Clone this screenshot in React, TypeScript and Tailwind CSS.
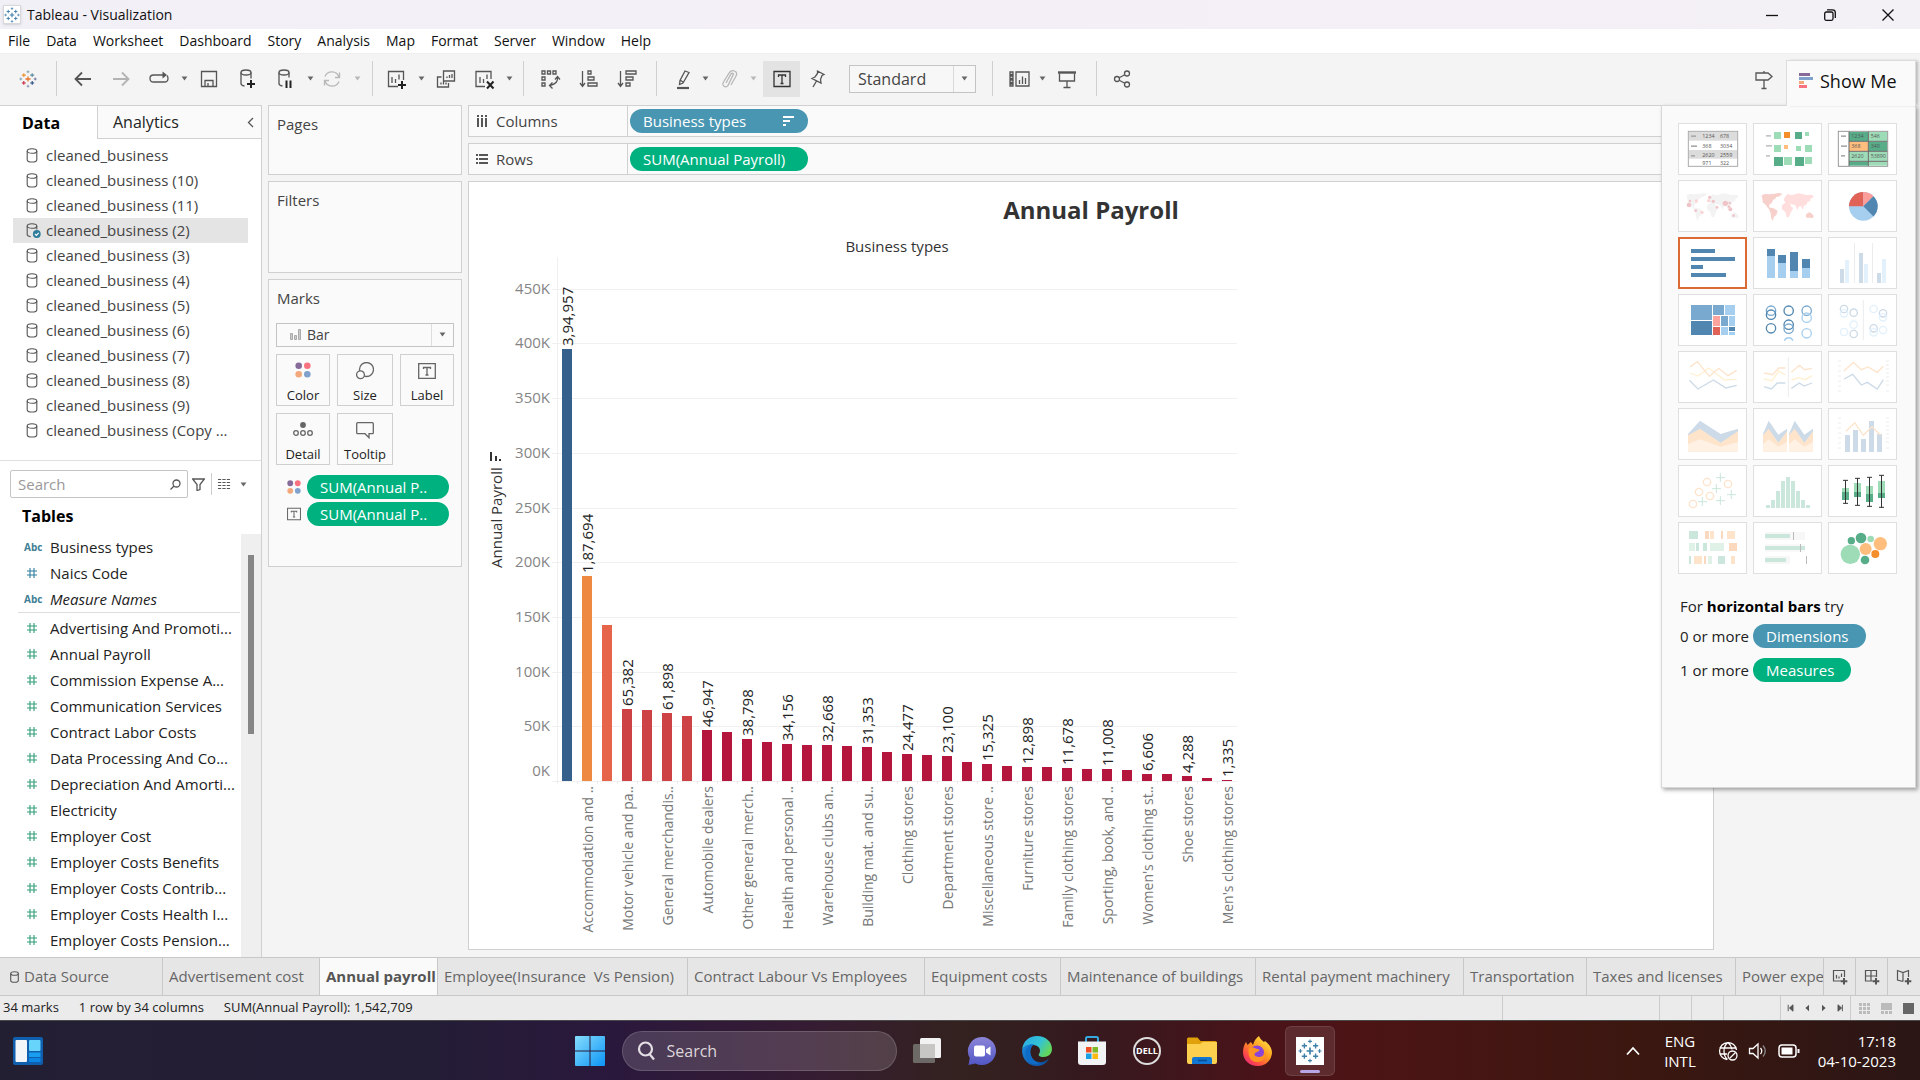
import React from "react";

type IconProps = { children: React.ReactNode; size?: string; className?: string; box?: string; sw?: number };

function Icon({ children, size = "w-6 h-6", className = "text-[#555]", box = "0 0 24 24", sw = 1.3 }: IconProps) {
  return (
    <svg viewBox={box} className={`${size} ${className} shrink-0`} fill="none" stroke="currentColor" strokeWidth={sw} aria-hidden="true">
      {children}
    </svg>
  );
}

const Caret = ({ className = "text-[#666]" }: { className?: string }) => (
  <svg viewBox="0 0 8 6" className={`h-[5px] w-[7px] ${className}`} aria-hidden="true">
    <path d="M0.5 0.5h7L4 5.5z" fill="currentColor" />
  </svg>
);

function TableauMark({ className, colors }: { className: string; colors: string[] }) {
  const plus = (x: number, y: number, r: number, w: number, c: string) => (
    <path key={`${x}-${y}`} d={`M${x - r} ${y}H${x + r}M${x} ${y - r}V${y + r}`} stroke={c} strokeWidth={w} />
  );
  return (
    <svg viewBox="0 0 24 24" className={className} fill="none" aria-hidden="true">
      {plus(12, 12, 3.4, 1.7, colors[0])}
      {plus(6.4, 6.8, 2.6, 1.4, colors[1])}
      {plus(17.6, 6.8, 2.6, 1.4, colors[2])}
      {plus(6.4, 17.2, 2.6, 1.4, colors[3])}
      {plus(17.6, 17.2, 2.6, 1.4, colors[4])}
      {plus(12, 2.4, 1.9, 1.1, colors[5])}
      {plus(12, 21.6, 1.9, 1.1, colors[6])}
      {plus(2.4, 12, 1.9, 1.1, colors[7])}
      {plus(21.6, 12, 1.9, 1.1, colors[8])}
    </svg>
  );
}

const blueMark = Array(9).fill("#3f80a8") as string[];
const brandMark = ["#e8762c", "#eb9129", "#5b879b", "#c72037", "#1f457e", "#7199a6", "#7b8cae", "#7199a6", "#5c6591"];

/* ---------- Title bar and menu ---------- */

function TitleBar() {
  return (
    <header className="flex h-[29px] shrink-0 items-center bg-gradient-to-r from-[#f2f0f7] via-[#f4eff6] to-[#f3f0f6]">
      <div className="ml-[3px] flex h-[19px] w-[18px] items-center justify-center border border-[#d8d8d8] bg-white shadow-sm">
        <TableauMark className="h-4 w-4" colors={blueMark} />
      </div>
      <span className="ml-1.5 text-sm text-[#111]">Tableau - Visualization</span>
      <div className="ml-auto flex text-[#111]">
        <button aria-label="Minimize" className="flex h-[29px] w-[58px] items-center justify-center">
          <Icon size="w-3 h-3" className="text-[#111]" box="0 0 12 12"><path d="M0 6.5h12" /></Icon>
        </button>
        <button aria-label="Restore" className="flex h-[29px] w-[58px] items-center justify-center">
          <Icon size="w-3 h-3" className="text-[#111]" box="0 0 12 12"><rect x="0.7" y="3" width="8.3" height="8.3" rx="1.5" /><path d="M3 .8h5.5q2.8 0 2.8 2.8V9" /></Icon>
        </button>
        <button aria-label="Close" className="mr-[3px] flex h-[29px] w-[58px] items-center justify-center">
          <Icon size="w-3 h-3" className="text-[#111]" box="0 0 12 12"><path d="M.5 .5l11 11M11.500 .5l-11 11" /></Icon>
        </button>
      </div>
    </header>
  );
}

const menus = ["File", "Data", "Worksheet", "Dashboard", "Story", "Analysis", "Map", "Format", "Server", "Window", "Help"];

function MenuBar() {
  return (
    <nav className="flex h-[25px] shrink-0 items-center gap-4 border-b border-[#eee] bg-white px-2 text-sm text-[#111]">
      {menus.map((m) => (
        <button key={m}>{m}</button>
      ))}
    </nav>
  );
}

/* ---------- Toolbar ---------- */

const Sep = ({ className = "" }: { className?: string }) => <span className={`h-[35px] w-px shrink-0 bg-[#cfcfcf] ${className}`} />;

function Tool({ label, w = "w-[38px]", children, className = "" }: { label: string; w?: string; children: React.ReactNode; className?: string }) {
  return (
    <button aria-label={label} className={`flex h-9 shrink-0 items-center justify-center ${w} ${className}`}>
      {children}
    </button>
  );
}

function Toolbar() {
  return (
    <div className="flex h-[51px] shrink-0 items-center bg-[#f4f4f4] pb-0.5">
      <Tool label="Start page" w="w-14"><TableauMark className="h-[18px] w-[18px]" colors={brandMark} /></Tool>
      <Sep className="mr-[7px]" />
      <Tool label="Undo"><Icon sw={1.8}><path d="M20 12H4.500M11 5.500L4.500 12l6.500 6.500" /></Icon></Tool>
      <Tool label="Redo"><Icon sw={1.8} className="text-[#b3b3b3]"><path d="M4 12h15.500M13 5.500l6.500 6.500-6.500 6.500" /></Icon></Tool>
      <Tool label="Replay"><Icon><path d="M15 8H6.500q-3.500 0-3.500 3.500t3.500 3.500h11q3.500 0 3.500-3.500 0-2-1-3M9 8h9" /><path d="M15.500 4.500L20 8l-4.500 3.500z" fill="currentColor" stroke="none" /></Icon></Tool>
      <Tool label="Replay options" w="w-3"><Caret /></Tool>
      <Tool label="Save"><Icon><path d="M4.500 4.500h15v15h-15z" /><path d="M8 19.500v-6h8v6M11 16v3" /></Icon></Tool>
      <Tool label="New data source"><Icon><ellipse cx="11" cy="5.500" rx="5" ry="2.500" /><path d="M6 5.500v11q0 2 3.500 2.500M16 5.500v6" /><path d="M16 13v8M12 17h8" stroke="#222" strokeWidth="2" /></Icon></Tool>
      <Tool label="Pause updates"><Icon><ellipse cx="11" cy="5.500" rx="5" ry="2.500" /><path d="M6 5.500v11q0 2 3.500 2.500M16 5.500v5" /><path d="M13.500 13.500v7.500M17.500 13.500v7.500" stroke="#222" strokeWidth="2" /></Icon></Tool>
      <Tool label="Pause options" w="w-3"><Caret /></Tool>
      <Tool label="Run update" w="w-8"><Icon className="text-[#b8b8b8]"><path d="M5 9.500A7.500 7.500 0 0 1 19 10M19 14.500A7.500 7.500 0 0 1 5 14M19.500 5.500V10.500H15M4.500 18.500v-5H9" /></Icon></Tool>
      <Tool label="Update options" w="w-[18px]"><Caret className="text-[#b8b8b8]" /></Tool>
      <Sep className="ml-1.5 mr-1" />
      <Tool label="New worksheet"><Icon><path d="M14 19.500H4.500v-15h15V13M8 10v6M11.500 12v4M15 7.500v5" /><path d="M18 14v8M14 18h8" stroke="#222" strokeWidth="2" /></Icon></Tool>
      <Tool label="New worksheet options" w="w-3"><Caret /></Tool>
      <Tool label="Duplicate"><Icon><path d="M9.500 4h11v10h-11zM7.500 10H3.500v10h11v-4M13 11V9.500M15.500 11V8M18 11V7M7 17.500v-2M9.500 17.500v-3M12 17.500v-2" /></Icon></Tool>
      <Tool label="Clear sheet"><Icon><path d="M13 19.500H4v-15h15V12M8 10v6M11.500 12v4M15 7.500V12" /><path d="M15 14.500l6.500 7M21.500 14.500l-6.500 7" stroke="#222" strokeWidth="2" /></Icon></Tool>
      <Tool label="Clear options" w="w-3"><Caret /></Tool>
      <Sep className="ml-2 mr-1.5" />
      <Tool label="Swap rows and columns" w="w-10"><Icon><path d="M4 4h3v3H4zM9.500 4h3v3h-3zM15 4h3v3h-3zM4 10h3v3H4zM4 16h3v3H4z" /><path d="M19.500 10q1 7-8 8.500M17 12.500l2.500-3 2.500 3M14.500 15.500l-3 3 3 3" /></Icon></Tool>
      <Tool label="Sort ascending"><Icon><path d="M5.500 4v15M3 16l2.500 3.500L8 16M11 4h3v3h-3zM11 10h6v3h-6zM11 16h9v3h-9z" /></Icon></Tool>
      <Tool label="Sort descending"><Icon><path d="M5.500 4v15M3 16l2.500 3.500L8 16M11 4h10v3H11zM11 10h7v3h-7zM11 16h4v3h-4z" /></Icon></Tool>
      <Sep className="ml-2.5 mr-2.5" />
      <Tool label="Highlight" w="w-8"><Icon><path d="M14 4l4 1.500-6 10.500-3.500 1.500.5-4zM9 13l3 2" /><path d="M6 21h12" strokeWidth="2.200" /></Icon></Tool>
      <Tool label="Highlight options" w="w-3"><Caret /></Tool>
      <Tool label="Group members" w="w-9"><Icon className="text-[#b8b8b8]"><path d="M9 16l5-9q1.500-1.500 2.500 0L11 18.500q-3 3-5-.5-.5-1.500.5-3l6-9.500q3-3.500 6.500-.500 1.500 2 0 4L14 18" /></Icon></Tool>
      <Tool label="Group options" w="w-3"><Caret className="text-[#b8b8b8]" /></Tool>
      <Tool label="Show mark labels" w="w-[37px]" className="ml-1 bg-[#e3e3e3]"><Icon className="text-[#333]"><path d="M4 4.500h16v15H4z" /><path d="M8.500 10V8h7v2M12 8v8.500M10.500 16.500h3" /></Icon></Tool>
      <Tool label="Fix axes" w="w-[34px]"><Icon><path d="M12.500 4l6.500 3.500-2 1-1.500 4 .5 3.500-9-4.500 3-1.500 2.500-3.500zM11.500 14L8 20" /></Icon></Tool>
      <label className="relative ml-[15px] flex h-7 w-[127px] shrink-0 items-center border border-[#c4c4c4] bg-[#f7f7f7]">
        <span className="sr-only">Fit</span>
        <select className="h-full w-full appearance-none bg-transparent pl-2 text-base text-[#444] outline-none">
          <option>Standard</option>
          <option>Entire View</option>
        </select>
        <span className="pointer-events-none absolute right-0 top-0 flex h-full w-[22px] items-center justify-center border-l border-[#d9d9d9]"><Caret /></span>
      </label>
      <Sep className="ml-4 mr-[9px]" />
      <Tool label="Show cards" w="w-9"><Icon><path d="M2 5h3v2.500H2zM2 9h3v2.500H2zM2 13h3v2.500H2zM2 17h3v2H2zM8 5h13v14H8zM11.500 17v-4M14.500 17V9.500M17.500 17v-6" /></Icon></Tool>
      <Tool label="Card options" w="w-2"><Caret /></Tool>
      <Tool label="Presentation mode" w="w-[42px]"><Icon><path d="M4.500 6.500v7.500h15V6.500M12 14v6M8.500 20.500h7" /><path d="M3 5.500h18" strokeWidth="2.400" /></Icon></Tool>
      <Sep className="ml-2 mr-1.5" />
      <Tool label="Share"><Icon><circle cx="7" cy="12" r="2.500" /><circle cx="17" cy="6.500" r="2.500" /><circle cx="17" cy="17.500" r="2.500" /><path d="M9.200 10.800l5.600-3M9.200 13.200l5.600 3" /></Icon></Tool>
      <Tool label="Guide" className="ml-auto mr-[137px]"><Icon><path d="M4 6h12l4 3.500-4 3.500H4zM12 4v2M12 13v8.500M9.500 21.500h5" /></Icon></Tool>
    </div>
  );
}

/* ---------- Data pane ---------- */

const sources = ["", " (10)", " (11)", " (2)", " (3)", " (4)", " (5)", " (6)", " (7)", " (8)", " (9)", " (Copy ..."];

function Cylinder({ checked = false }: { checked?: boolean }) {
  return (
    <Icon size="w-[15px] h-[15px]" box="0 0 15 15" sw={1.1}>
      <ellipse cx="6" cy="3" rx="4.800" ry="2.300" />
      <path d={checked ? "M1.200 3v8.500q0 1.500 3.500 2.300M10.800 3v3.500" : "M1.200 3v8.700q0 2.300 4.800 2.300t4.800-2.300V3"} />
      {checked && <circle cx="10.800" cy="11" r="3.900" fill="#2f7d9d" stroke="none" />}
      {checked && <path d="M9 11l1.400 1.400 2.300-2.600" stroke="#fff" />}
    </Icon>
  );
}

const dimensions = [
  { kind: "Abc", name: "Business types" },
  { kind: "#", name: "Naics Code" },
  { kind: "Abc", name: "Measure Names", italic: true },
];

const measures = [
  "Advertising And Promoti...", "Annual Payroll", "Commission Expense A...", "Communication Services", "Contract Labor Costs",
  "Data Processing And Co...", "Depreciation And Amorti...", "Electricity", "Employer Cost", "Employer Costs Benefits",
  "Employer Costs Contrib...", "Employer Costs Health I...", "Employer Costs Pension...",
];

const Hash = ({ className }: { className: string }) => (
  <Icon size="w-2.5 h-2.5" className={className} box="0 0 10 10" sw={1.1}><path d="M3 0v10M7 0v10M0 3h10M0 7h10" /></Icon>
);

function DataPane() {
  return (
    <aside className="flex w-[262px] shrink-0 flex-col border-r border-t border-[#d0d0d0] bg-white">
      <div className="flex h-[33px] shrink-0">
        <button className="w-[97px] pr-[15px] text-base font-bold text-black">Data</button>
        <div className="flex flex-1 items-center justify-between border-b border-l border-[#d0d0d0] bg-[#fafafa] pl-[15px] pr-[7px]">
          <button className="text-base text-[#222]">Analytics</button>
          <button aria-label="Collapse pane"><Icon size="w-[7px] h-[11px]" box="0 0 7 11"><path d="M6 1L1.500 5.500 6 10" /></Icon></button>
        </div>
      </div>
      <ul className="h-[322px] shrink-0 border-b border-[#e0e0e0] pl-[13px] pr-[13px] pt-1 text-[15px] text-[#444]">
        {sources.map((s) => (
          <li key={s} className={`flex h-[25px] items-center gap-[5px] whitespace-nowrap pl-[13px] ${s === " (2)" ? "bg-[#e4e4e4]" : ""}`}>
            <Cylinder checked={s === " (2)"} />
            <button>cleaned_business{s}</button>
          </li>
        ))}
      </ul>
      <div className="flex shrink-0 items-center pl-2.5 pt-[9px]">
        <label className="flex h-7 w-[178px] items-center rounded-xs border border-[#c4c4c4] pr-1.5">
          <span className="sr-only">Search fields</span>
          <input placeholder="Search" className="w-full min-w-0 flex-1 pl-[7px] text-[15px] outline-none placeholder:text-[#999]" />
          <Icon size="w-[11px] h-[11px]" box="0 0 11 11"><circle cx="6.500" cy="4.500" r="3.500" /><path d="M4 7L.5 10.500" /></Icon>
        </label>
        <button aria-label="Filter fields" className="ml-1"><Icon size="w-[13px] h-[13px]" box="0 0 13 13"><path d="M.6 1h11.800L8 6.500v5l-3 1v-6z" /></Icon></button>
        <span className="ml-1.5 h-[22px] w-px bg-[#ccc]" />
        <button aria-label="View as" className="ml-1.5 flex items-center gap-2.5"><Icon size="w-3 h-3" box="0 0 12 12" sw={1.2}><path d="M0 1.500h3.200m1.200 0h3.200m1.200 0H12M0 4.500h3.200m1.200 0h3.200m1.200 0H12M0 7.500h3.200m1.200 0h3.200m1.200 0H12M0 10.500h3.200m1.200 0h3.200m1.200 0H12" /></Icon><Caret /></button>
      </div>
      <h2 className="flex h-9 shrink-0 items-center pl-[22px] text-base font-bold text-black">Tables</h2>
      <div className="flex min-h-0 flex-1 overflow-hidden">
        <div className="flex-1 overflow-hidden pl-[18px] pr-px text-[15px] text-[#222]">
          <ul className="border-b border-[#ddd]">
            {dimensions.map((d) => (
              <li key={d.name} className="flex h-[26px] items-center">
                <span className="flex w-8 items-center pl-1.5">
                  {d.kind === "#" ? <span className="pl-[3px]"><Hash className="text-[#2f7d9d]" /></span> : <span className="text-[10px] font-bold text-[#3f7f95]">Abc</span>}
                </span>
                <button className={d.italic ? "italic" : ""}>{d.name}</button>
              </li>
            ))}
          </ul>
          <ul className="pt-0.5">
            {measures.map((m) => (
              <li key={m} className="flex h-[26px] items-center whitespace-nowrap">
                <span className="flex w-8 items-center pl-[9px]"><Hash className="text-[#2f9d78]" /></span>
                <button>{m}</button>
              </li>
            ))}
          </ul>
        </div>
        <div className="w-5 shrink-0 bg-[#efefef] pl-[7px] pt-[21px]">
          <div className="h-[179px] w-1.5 bg-[#868686]" />
        </div>
      </div>
    </aside>
  );
}

/* ---------- Cards ---------- */

const ColorDots = ({ size = "w-4 h-4" }: { size?: string }) => (
  <svg viewBox="0 0 16 16" className={size} aria-hidden="true">
    <circle cx="3.700" cy="3.700" r="3.300" fill="#866b98" /><circle cx="12.300" cy="3.700" r="3.300" fill="#f8737f" />
    <circle cx="3.700" cy="12.300" r="3.300" fill="#f3a87b" /><circle cx="12.300" cy="12.300" r="3.300" fill="#7fa1cc" />
  </svg>
);

const TextBox = ({ size = "w-[18px] h-[18px]" }: { size?: string }) => (
  <Icon size={size} box="0 0 18 18" className="text-[#666]"><path d="M.7 1.700h16.600v14.600H.7zM5.500 7V5.500h7V7M9 5.500v7.500M7.500 13h3" /></Icon>
);

const markButtons = [
  { name: "Color", icon: <ColorDots size="w-4 h-4" /> },
  { name: "Size", icon: <Icon size="w-[18px] h-[18px]" box="0 0 18 18" className="text-[#666]"><circle cx="10.500" cy="7.500" r="7" /><circle cx="4.500" cy="12.700" r="3.900" fill="#fafafa" /></Icon> },
  { name: "Label", icon: <TextBox /> },
  { name: "Detail", icon: <Icon size="w-5 h-4" box="0 0 20 16" className="text-[#666]"><circle cx="10" cy="4" r="2.900" fill="currentColor" stroke="none" /><circle cx="3" cy="12" r="2.300" /><circle cx="10" cy="12" r="2.300" /><circle cx="17" cy="12" r="2.300" /></Icon> },
  { name: "Tooltip", icon: <Icon size="w-[18px] h-[18px]" box="0 0 18 18" className="text-[#666]"><path d="M1.700 1.700h14.600q1 0 1 1v9q0 1-1 1H13v4l-4-4H1.700q-1 0-1-1v-9q0-1 1-1z" /></Icon> },
];

function Cards() {
  return (
    <div className="flex w-[194px] shrink-0 flex-col gap-1.5 text-[15px] text-[#444]">
      <section className="h-[70px] border border-[#d0d0d0] bg-[#fafafa] px-2 pt-[7px]"><h2>Pages</h2></section>
      <section className="h-[92px] border border-[#d0d0d0] bg-[#fafafa] px-2 pt-[7px]"><h2>Filters</h2></section>
      <section className="h-[288px] border border-[#d0d0d0] bg-[#fafafa] px-[7px] pt-[7px]">
        <h2 className="pl-px">Marks</h2>
        <label className="relative mt-[13px] flex h-6 items-center border border-[#c4c4c4] bg-[#fafafa]">
          <span className="sr-only">Mark type</span>
          <svg viewBox="0 0 11 11" className="pointer-events-none absolute left-[13px] h-[11px] w-[11px]" fill="none" stroke="#aaa" aria-hidden="true"><path d="M.5 4.500h2v6h-2zM4.500 6.500h2v4h-2zM8.500 .5h2v10h-2z" fill="#ccc" /></svg>
          <select className="h-full w-full appearance-none bg-transparent pl-[30px] text-sm text-[#444] outline-none">
            <option>Bar</option>
            <option>Line</option>
          </select>
          <span className="pointer-events-none absolute right-0 top-0 flex h-full w-[22px] items-center justify-center border-l border-[#ddd]"><Caret /></span>
        </label>
        <div className="mt-[7px] grid grid-cols-[54px_56px_54px] gap-[7px] text-[13px] text-[#222]">
          {markButtons.map((b) => (
            <button key={b.name} className="flex h-[52px] flex-col items-center justify-between border border-[#cfcfcf] bg-[#fafafa] pt-[7px]">
              {b.icon}
              <span className="leading-5">{b.name}</span>
            </button>
          ))}
        </div>
        <div className="mt-2.5 flex flex-col gap-[3px]">
          {[<ColorDots key="c" size="w-3.5 h-3.5" />, <TextBox key="t" size="w-3.5 h-3.5" />].map((ic, i) => (
            <div key={i} className="flex items-center gap-1.5 pl-[11px] pr-[5px]">
              {ic}
              <button className="h-6 flex-1 rounded-full bg-[#00b180] pl-[13px] text-left text-[15px] leading-6 font-medium text-white">SUM(Annual P..</button>
            </div>
          ))}
        </div>
      </section>
    </div>
  );
}

function Shelf({ name, icon, children }: { name: string; icon: React.ReactNode; children: React.ReactNode }) {
  return (
    <div className="flex h-8 shrink-0 border border-[#d0d0d0] bg-[#fafafa] text-[15px] text-[#444]">
      <div className="flex w-[159px] items-center gap-2 border-r border-[#d0d0d0] pl-[7px]">
        {icon}
        <span>{name}</span>
      </div>
      <div className="flex items-center pl-0.5">{children}</div>
    </div>
  );
}

/* ---------- Bar chart ---------- */

const marks: { v: number; label?: string; cat?: string }[] = [
  { v: 394957, label: "3,94,957" }, { v: 187694, label: "1,87,694", cat: "Accommodation and .." },
  { v: 142700 }, { v: 65382, label: "65,382", cat: "Motor vehicle and pa.." },
  { v: 65000 }, { v: 61898, label: "61,898", cat: "General merchandis.." },
  { v: 59500 }, { v: 46947, label: "46,947", cat: "Automobile dealers" },
  { v: 44800 }, { v: 38798, label: "38,798", cat: "Other general merch.." },
  { v: 35700 }, { v: 34156, label: "34,156", cat: "Health and personal .." },
  { v: 32900 }, { v: 32668, label: "32,668", cat: "Warehouse clubs an.." },
  { v: 32200 }, { v: 31353, label: "31,353", cat: "Building mat. and su.." },
  { v: 26500 }, { v: 24477, label: "24,477", cat: "Clothing stores" },
  { v: 23800 }, { v: 23100, label: "23,100", cat: "Department stores" },
  { v: 17400 }, { v: 15325, label: "15,325", cat: "Miscellaneous store .." },
  { v: 13700 }, { v: 12898, label: "12,898", cat: "Furniture stores" },
  { v: 12800 }, { v: 11678, label: "11,678", cat: "Family clothing stores" },
  { v: 11300 }, { v: 11008, label: "11,008", cat: "Sporting, book, and .." },
  { v: 10500 }, { v: 6606, label: "6,606", cat: "Women's clothing st.." },
  { v: 6500 }, { v: 4288, label: "4,288", cat: "Shoe stores" },
  { v: 2800 }, { v: 1335, label: "1,335", cat: "Men's clothing stores" },
];

const barColor = (i: number) => (i === 0 ? "#35608c" : i === 1 ? "#ed8941" : i === 2 ? "#e66449" : i < 7 ? "#cd4345" : "#b5163e");

function BarChart() {
  const left = 88;
  const base = 525;
  const step = 20;
  const perK = 1.094;
  const right = left + marks.length * step;
  const ticks = [0, 50, 100, 150, 200, 250, 300, 350, 400, 450];
  return (
    <svg width="780" height="690" viewBox="0 0 780 690" className="block" role="img" aria-label="Annual payroll by business type" shapeRendering="crispEdges">
      {ticks.map((t) => {
        const y = Math.round(base - t * perK);
        return (
          <g key={t}>
            <path d={`M${left - 5} ${y + 0.5}H${right}`} stroke="#f0f0f0" />
            <text x={left - 7} y={t === 0 ? y - 5 : y + 5} textAnchor="end" fontSize="15" fill="#858585">{t}K</text>
          </g>
        );
      })}
      <path d={`M${left + 0.5} 1V${base}`} stroke="#f0f0f0" />
      {marks.map((m, i) => {
        const h = Math.round((m.v / 1000) * perK);
        const x = left + i * step + 5;
        return (
          <g key={i}>
            <rect x={x} y={base - h} width="10" height={h} fill={barColor(i)} />
            <path d={`M${x - 4.5} ${base}v3`} stroke="#ececec" />
            {m.label && <text transform={`translate(${x + 11} ${base - h - 3}) rotate(-90)`} fontSize="15" fill="#222">{m.label}</text>}
            {m.cat && <text transform={`translate(${x + 11} ${base + 5}) rotate(-90)`} textAnchor="end" fontSize="14" fill="#777">{m.cat}</text>}
          </g>
        );
      })}
      <text transform="translate(33 312) rotate(-90)" fontSize="15" fill="#333">Annual Payroll</text>
      <path d="M22 195.500v9M27 199.500v5M31 202.500v2" stroke="#333" strokeWidth="2" />
    </svg>
  );
}

function Worksheet() {
  return (
    <main className="flex min-h-0 flex-1 flex-col overflow-hidden border border-[#d0d0d0] bg-white">
      <h1 className="pt-3 text-center text-2xl leading-8 font-bold text-[#333]">Annual Payroll</h1>
      <p className="mt-2.5 w-[856px] text-center text-[15px] leading-5 text-[#333]">Business types</p>
      <BarChart />
    </main>
  );
}

/* ---------- Show Me ---------- */

const R = ({ x, y, w, h, f }: { x: number; y: number; w: number; h: number; f: string }) => <rect x={x} y={y} width={w} height={h} fill={f} />;
type Q = [number, number, number, number, string];
const rects = (list: Q[]) => list.map(([x, y, w, h, f], i) => <R key={i} x={x} y={y} w={w} h={h} f={f} />);
const line = (d: string, c: string, w = 4) => <path d={d} stroke={c} strokeWidth={w} fill="none" />;
type C = [number, number, number, string];
const rings = (list: C[], w = 3) => list.map(([x, y, r, c], i) => <circle key={i} cx={x} cy={y} r={r} stroke={c} strokeWidth={w} fill="none" />);
const discs = (list: C[]) => list.map(([x, y, r, c], i) => <circle key={i} cx={x} cy={y} r={r} fill={c} />);

const americas = "M26 46l10-4 16 1 8-2 12 6-4 8-8 5-4 10-6 2-2 8 8 8-4 4-10-12-6-8-6-4-2-12zM62 42l14-3 12 2-8 8-8 2zM52 83l10 2 12 8-4 12-8 6-2 11-5-6-2-16-4-10z";
const eurasia = "M92 60l4-10 8-8 12 4 12-4 10-2 22 5 18 0 4 6-10 6 0 6-8 2-4 10-8 2-2 12-6-10-6 0-4 10-8-14-10-2-6-4-10 2zM87 76l10-8 14 2 4 10 6 4-8 14-6 14-6 0-4-16-10-8z";
const australia = "M158 104l10-7 6 2 8 8-2 8-8-2-12 0z";

const DB = "#5086b0", LB = "#a6cfef", MB = "#7aa9cf", FB = "#cddbe8", PB = "#e2f1fc", FO = "#fde4cb", FY = "#fff0d2";
const DG = "#57ad88", LG = "#9edcb8", FG = "#cbe6da", OR = "#f48d2c", LO = "#ffbe7d";

const scales = (
  <path d="M30 30h9M30 45h9M30 60h9M30 75h9M30 90h9M30 105h9M30 120h9M174 30h9M174 42h9M174 54h9M174 66h9M174 78h9M174 90h9M174 102h9M174 120h9" stroke="#ececec" strokeWidth="3" />
);
const cellText = (rows: [number, number, string][]) => rows.map(([x, y, s]) => <text key={s} x={x} y={y} fontSize="16" fill="#555">{s}</text>);

const charts: { name: string; art: React.ReactNode }[] = [
  { name: "Text table", art: <><rect x="31" y="25" width="148" height="105" fill="#fff" stroke="#aaa" strokeWidth="3" />{rects([[33, 27, 144, 26, "#dcdcdc"], [33, 81, 144, 26, "#dcdcdc"], [39, 37, 15, 5, "#aaa"], [39, 67, 18, 5, "#aaa"], [39, 96, 12, 5, "#aaa"]])}{cellText([[73, 46, "1234"], [126, 46, "678"], [73, 74, "368"], [126, 74, "3034"], [73, 101, "2620"], [126, 101, "2559"], [73, 125, "971"], [126, 125, "322"]])}</> },
  { name: "Heat map", art: rects([[39, 36, 15, 5, "#c4c4c4"], [39, 66, 18, 5, "#c4c4c4"], [39, 96, 12, 5, "#c4c4c4"], [63, 27, 21, 21, LG], [93, 27, 18, 18, OR], [126, 27, 21, 21, DG], [156, 27, 12, 12, LG], [63, 66, 21, 21, LG], [93, 66, 12, 12, LO], [129, 69, 15, 15, LG], [156, 66, 21, 21, LG], [63, 102, 27, 27, DG], [93, 102, 24, 24, LG], [126, 102, 27, 27, DG], [156, 102, 21, 21, LG]]) },
  { name: "Highlight table", art: <><rect x="31" y="25" width="148" height="105" fill="#fff" stroke="#999" strokeWidth="3" />{rects([[63, 27, 57, 27, DG], [122, 27, 55, 27, LG], [63, 57, 57, 27, LO], [122, 57, 55, 27, DG], [63, 87, 57, 27, LG], [122, 87, 55, 27, LG], [63, 117, 57, 11, DG], [122, 117, 55, 11, LG], [39, 37, 15, 5, "#aaa"], [39, 67, 18, 5, "#aaa"], [39, 96, 12, 5, "#aaa"]])}<path d="M63 26v103M121 26v103M63 55h115M63 85h115M63 115h115" stroke="#666" strokeWidth="3" />{cellText([[70, 46, "1234"], [128, 46, "546"], [70, 76, "368"], [128, 76, "340"], [70, 106, "2620"], [128, 106, "53890"]])}</> },
  { name: "Symbol map", art: <><path d={americas + eurasia + australia} fill="#f3f3f3" />{discs([[33, 75, 7, "#efc3c7"], [36, 63, 4, "#efc3c7"], [55, 63, 5, "#fbd5d5"], [95, 52, 5, "#efc3c7"], [92, 62, 5, "#fbd5d5"], [106, 64, 5, "#efc3c7"], [142, 70, 8, "#efc3c7"], [155, 69, 4, "#efc3c7"], [153, 80, 4, "#efc3c7"], [157, 88, 6, "#efc3c7"], [117, 82, 4, "#efc3c7"], [53, 92, 4, "#efc3c7"], [72, 97, 5, "#fbd5d5"], [167, 107, 4, "#efc3c7"]])}</> },
  { name: "Filled map", art: <><path d={americas + australia} fill="#f7cfcb" /><path d={eurasia} fill="#ffdedd" /></> },
  { name: "Pie chart", art: <><circle cx="106" cy="79" r="43" fill={LB} /><path d="M106 79V36a43 43 0 0 0-43 43z" fill="#e16358" /><path d="M106 79V36a43 43 0 0 1 30.400 12.600z" fill="#ff9d9a" /><path d="M106 79l30.400-30.400a43 43 0 0 1 0 60.800z" fill={DB} /></> },
  { name: "Horizontal bars", art: rects([[39, 36, 72, 12, DB], [39, 60, 132, 12, DB], [39, 84, 36, 12, DB], [39, 108, 105, 12, DB]]) },
  { name: "Stacked bars", art: rects([[42, 36, 24, 21, DB], [42, 57, 24, 66, LB], [75, 54, 24, 24, DB], [75, 78, 24, 45, LB], [111, 45, 24, 57, DB], [111, 102, 24, 21, LB], [147, 66, 24, 27, DB], [147, 93, 24, 30, LB]]) },
  { name: "Side-by-side bars", art: rects([[36, 96, 12, 42, FB], [51, 69, 12, 69, PB], [78, 18, 3, 120, "#ececec"], [93, 48, 12, 90, FB], [108, 81, 12, 57, PB], [132, 18, 3, 120, "#ececec"], [147, 108, 12, 30, FB], [162, 66, 12, 72, PB]]) },
  { name: "Treemap", art: rects([[39, 33, 63, 45, MB], [39, 81, 63, 42, DB], [105, 33, 33, 30, MB], [141, 33, 30, 30, LB], [105, 66, 21, 30, "#ffa39e"], [129, 66, 21, 30, MB], [153, 66, 18, 30, LB], [105, 99, 21, 24, "#e16358"], [129, 99, 21, 24, LB], [153, 99, 18, 12, DB], [153, 114, 18, 9, LB]]) },
  { name: "Circle views", art: <>{rings([[54, 50, 14, MB], [54, 62, 14, DB], [54, 103, 14, DB], [107, 50, 14, DB], [107, 92, 14, DB], [107, 104, 14, MB], [161, 50, 14, MB], [161, 71, 14, LB], [161, 118, 14, LB]], 4)}<path d="M94 140a14 14 0 0 1 26 0" stroke={LB} strokeWidth="4" fill="none" /></> },
  { name: "Side-by-side circles", art: <>{rings([[48, 45, 11, FB], [48, 58, 11, PB], [77, 56, 11, FB], [77, 92, 11, PB], [48, 114, 11, PB], [77, 120, 11, FB], [137, 45, 11, PB], [165, 58, 11, FB], [165, 70, 11, PB], [137, 103, 11, FB], [137, 115, 11, PB], [165, 108, 11, PB]], 4)}<path d="M106 18v120" stroke="#ececec" strokeWidth="3" /></> },
  { name: "Continuous lines", art: <>{line("M36 66l24 9 32-24 48 36 36-2", FY)}{line("M36 48l22-16 36 44 28-24 28 22 26-16", FO)}{line("M34 88l26 26 46-27 38 24 32-8", FB)}</> },
  { name: "Discrete lines", art: <><path d="M106 18v120" stroke="#ececec" strokeWidth="3" />{line("M33 84l24 5 20-29 20 12M115 87l22-7 20 6 20-12", FY)}{line("M33 66l26 5 18-20h20M115 64l24-21 16 13 22-4", FO)}{line("M33 107l22 7 18-18h24M115 112l24-16 14 9 24-9", FB)}</> },
  { name: "Dual lines", art: <>{scales}{line("M48 60l28-26 24 22 20-8 28 16 18-18", FO)}{line("M48 84l26-14 26 32 18-8 30 20 18-28", FB)}</> },
  { name: "Area, continuous", art: <><path d="M30 78l36-40 62 40 52-16v69H30z" fill={FB} /><path d="M30 82l36-20 62 42 52-34v61H30z" fill={FO} /><path d="M30 108l36-14 62 22 52-14v29H30z" fill="#fff1e3" /></> },
  { name: "Area, discrete", art: <><path d="M30 78l17-40 29 42 26-18v69H30zM108 78l17-40 29 42 26-18v69h-72z" fill={FB} /><path d="M30 82l17-20 29 42 26-34v61H30zM108 82l17-20 29 42 26-34v61h-72z" fill={FO} /><path d="M30 108l17-14 29 22 26-14v29H30zM108 108l17-14 29 22 26-14v29h-72z" fill="#fff1e3" /></> },
  { name: "Dual combination", art: <>{scales}{rects([[51, 81, 15, 51, FB], [75, 66, 15, 66, FB], [99, 93, 15, 39, FB], [123, 39, 15, 93, FB], [147, 78, 15, 54, FB]])}{line("M54 70l26-26 26 38 26-26 26 26", FO)}</> },
  { name: "Scatter plot", art: <>{rings([[87, 51, 11, FO], [150, 57, 11, FO], [63, 81, 11, FO], [96, 93, 11, FO], [45, 117, 11, FO]], 4)}{line("M114 38h27M127 24v27M102 71h27M115 57v27M147 89h27M160 75v27M60 110h27M73 96v27M114 107h27M127 93v27", FG, 3)}</> },
  { name: "Histogram", art: rects([[39, 120, 12, 9, FG], [54, 105, 12, 24, FG], [69, 78, 12, 51, FG], [84, 48, 12, 81, FG], [99, 36, 12, 93, FG], [114, 48, 12, 81, FG], [129, 78, 12, 51, FG], [144, 105, 12, 24, FG], [159, 120, 12, 9, FG]]) },
  { name: "Box-and-whisker plot", art: <>{rects([[42, 69, 21, 12, LG], [42, 81, 21, 24, DG], [78, 54, 21, 27, LG], [78, 81, 21, 15, DG], [114, 63, 21, 24, LG], [114, 87, 21, 24, DG], [150, 48, 21, 36, LG], [150, 84, 21, 15, DG]])}<path d="M52.500 46v69M45 46h15M45 115h15M88.500 40v81M81 40h15M81 121h15M124.500 37v87M117 37h15M117 124h15M160.500 31v96M153 31h15M153 127h15" stroke="#333" strokeWidth="3" /></> },
  { name: "Gantt", art: rects([[33, 27, 27, 24, FG], [81, 27, 12, 24, "#fbd9bf"], [96, 27, 12, 24, FO], [129, 27, 6, 24, "#fbd9bf"], [147, 27, 24, 24, FO], [33, 63, 18, 24, "#e0f1e8"], [54, 63, 9, 24, FG], [75, 63, 12, 24, FG], [96, 63, 42, 24, "#e0f1e8"], [153, 63, 24, 24, "#fbd9bf"], [33, 102, 6, 24, FG], [48, 102, 24, 24, FO], [78, 102, 6, 24, "#fbd9bf"], [90, 102, 12, 24, "#e0f1e8"], [120, 102, 21, 24, FG], [159, 102, 12, 24, FO]]) },
  { name: "Bullet graph", art: rects([[36, 30, 120, 24, "#f7f7f7"], [36, 66, 120, 24, "#f9f9f9"], [36, 102, 75, 24, "#f7f7f7"], [36, 36, 75, 12, FG], [36, 72, 120, 12, FG], [36, 108, 63, 12, FG], [120, 30, 3, 24, "#bbb"], [141, 66, 3, 24, "#bbb"], [159, 102, 3, 24, "#bbb"]]) },
  { name: "Packed bubbles", art: discs([[67, 97, 29, LG], [70, 56, 11, DG], [99, 48, 16, DG], [128, 51, 10, LG], [157, 65, 20, LO], [113, 81, 18, LO], [142, 96, 12, OR], [111, 114, 13, DG]]) },
];

function ShowMe() {
  return (
    <aside className="absolute right-1 top-[60px] flex h-[728px] w-[255px] flex-col">
      <button className="relative z-10 ml-auto flex h-[46px] w-[130px] shrink-0 items-center gap-[7px] border border-b-0 border-[#dcdcdc] bg-[#fafafa] pb-1.5 pl-3 text-lg text-[#111] shadow-[3px_0_3px_-1px_rgba(0,0,0,0.250)]">
        <svg viewBox="0 0 14 15" className="h-[15px] w-3.5 shrink-0" aria-hidden="true">{rects([[0, 0, 11, 3, "#866b98"], [0, 4, 14, 3, "#7fa1cc"], [0, 8, 5, 3, "#f3a87b"], [0, 12, 8, 3, "#f8737f"]])}</svg>
        <span className="whitespace-nowrap">Show Me</span>
      </button>
      <div className="-mt-px flex-1 border border-[#d8d8d8] bg-[#fafafa] pl-4 pt-[17px] text-[15px] text-[#222] shadow-[2px_2px_4px_rgba(0,0,0,0.350)]">
        <div className="grid grid-cols-[69px_69px_69px] gap-x-1.5 gap-y-[5px]">
          {charts.map((c) => (
            <button key={c.name} aria-label={c.name} className={`h-[52px] bg-white ${c.name === "Horizontal bars" ? "outline-2 -outline-offset-2 outline-[#dc6a35]" : "outline -outline-offset-1 outline-[#dfdfdf]"}`}>
              <svg viewBox="0 0 207 156" className="block h-[52px] w-[69px]" aria-hidden="true">{c.art}</svg>
            </button>
          ))}
        </div>
        <p className="ml-0.5 mt-[22px] leading-5">For <b className="text-black">horizontal bars</b> try</p>
        <p className="ml-0.5 mt-2 flex h-6 items-center gap-1">0 or more <span className="h-6 w-[113px] rounded-full bg-[#4996b2] pl-[13px] leading-6 font-medium text-white">Dimensions</span></p>
        <p className="ml-0.5 mt-2.5 flex h-6 items-center gap-1">1 or more <span className="h-6 w-[98px] rounded-full bg-[#00b180] pl-[13px] leading-6 font-medium text-white">Measures</span></p>
      </div>
    </aside>
  );
}

/* ---------- Sheet tabs and status bar ---------- */

const sheets: [string, string][] = [
  ["Advertisement cost", "w-[157px]"], ["Annual payroll", "w-[118px]"], ["Employee(Insurance  Vs Pension)", "w-[250px]"],
  ["Contract Labour Vs Employees", "w-[237px]"], ["Equipment costs", "w-[136px]"], ["Maintenance of buildings", "w-[195px]"],
  ["Rental payment machinery", "w-[208px]"], ["Transportation", "w-[123px]"], ["Taxes and licenses", "w-[149px]"],
];

function SheetTabs() {
  return (
    <div className="flex h-[39px] shrink-0 border-y border-[#c8c8c8] bg-[#e6e6e6] text-[15px] text-[#666]">
      <button className="flex w-[163px] shrink-0 items-center gap-[5px] border-r border-[#c8c8c8] pl-2.5">
        <Icon size="w-[9px] h-3" box="0 0 9 12" sw={1.1}><ellipse cx="4.500" cy="2.500" rx="3.800" ry="1.800" /><path d="M.7 2.500v7q0 1.800 3.800 1.800t3.800-1.800v-7" /></Icon>
        Data Source
      </button>
      {sheets.map(([s, w]) => (
        <button key={s} className={`shrink-0 overflow-hidden whitespace-pre border-r border-[#c8c8c8] pl-1.5 text-left ${w} ${s === "Annual payroll" ? "bg-[#fafafa] font-bold text-[#555]" : ""}`}>{s}</button>
      ))}
      <button className="min-w-0 flex-1 overflow-hidden whitespace-nowrap border-r border-[#c8c8c8] pl-1.5 text-left">Power expenses</button>
      <button aria-label="New worksheet" className="flex w-8 shrink-0 items-center justify-center border-r border-[#c8c8c8]"><Icon size="w-4 h-4" box="0 0 16 16" sw={1.200}><path d="M9 12H1.500V1.500h11V8M4.500 6v3.500M7 7.500v2M9.500 4.500V8" /><path d="M12 9v6.500M8.800 12.200h6.500" strokeWidth="2" /></Icon></button>
      <button aria-label="New dashboard" className="flex w-8 shrink-0 items-center justify-center border-r border-[#c8c8c8]"><Icon size="w-4 h-4" box="0 0 16 16" sw={1.200}><path d="M9 12H1.500V1.500h11V8M1.500 7H12M7 1.500V12" /><path d="M12 9v6.500M8.800 12.200h6.500" strokeWidth="2" /></Icon></button>
      <button aria-label="New story" className="flex w-8 shrink-0 items-center justify-center"><Icon size="w-4 h-4" box="0 0 16 16" sw={1.200}><path d="M7 12.500L1.500 11V1.500L7 3.500l5.500-2V8M7 3.500v9" /><path d="M12 9v6.500M8.800 12.200h6.500" strokeWidth="2" /></Icon></button>
    </div>
  );
}

function StatusBar() {
  return (
    <footer className="flex h-6 shrink-0 items-stretch bg-[#ebebeb] text-[13px] text-[#222]">
      <div className="flex flex-1 items-center gap-5 pl-[3px]">
        <span>34 marks</span>
        <span>1 row by 34 columns</span>
        <span>SUM(Annual Payroll): 1,542,709</span>
      </div>
      <span className="w-[157px] border-l border-[#ccc]" />
      <span className="w-8 border-l border-[#ccc]" />
      <span className="w-8 border-l border-[#ccc]" />
      <span className="w-[57px] border-l border-[#ccc]" />
      <div className="flex w-[71px] items-center justify-between border-x border-[#ccc] px-1.5 text-[#555]">
        {["M1 1v8M7 1v8L2.500 5z", "M7 1v8L2.500 5z", "M2 1v8L6.500 5z", "M2 1v8L6.500 5zM7.500 1v8"].map((d, i) => (
          <button key={i} aria-label={["First sheet", "Previous sheet", "Next sheet", "Last sheet"][i]}>
            <svg viewBox="0 0 9 10" className="h-2 w-2" aria-hidden="true"><path d={d} fill="currentColor" stroke={i % 3 === 0 ? "currentColor" : "none"} strokeWidth="1.200" /></svg>
          </button>
        ))}
      </div>
      <div className="flex w-[69px] items-center justify-between pl-2 pr-1.5">
        <button aria-label="Sheet sorter"><svg viewBox="0 0 11 11" className="h-[11px] w-[11px]" fill="#bbb" aria-hidden="true"><path d="M0 0h3v3H0zM4 0h3v3H4zM8 0h3v3H8zM0 4h3v3H0zM4 4h3v3H4zM8 4h3v3H8zM0 8h3v3H0zM4 8h3v3H4zM8 8h3v3H8z" /></svg></button>
        <button aria-label="Filmstrip"><svg viewBox="0 0 11 11" className="h-[11px] w-[11px]" fill="#bbb" aria-hidden="true"><path d="M0 0h11v7H0zM0 8h3v3H0zM4 8h3v3H4zM8 8h3v3H8z" /></svg></button>
        <button aria-label="Tabs view"><span className="block h-[11px] w-[11px] bg-[#666]" /></button>
      </div>
    </footer>
  );
}

/* ---------- Taskbar ---------- */

const apps: { name: string; icon: React.ReactNode }[] = [
  { name: "Task view", icon: <svg viewBox="0 0 30 30" className="h-[30px] w-[30px]" aria-hidden="true"><rect x="1" y="8" width="22" height="19" rx="1.500" fill="#6d6966" /><rect x="8" y="2" width="21" height="20" rx="1.500" fill="#f2f2f2" /><rect x="8" y="8" width="15" height="14" fill="#c8c6c4" /></svg> },
  { name: "Chat", icon: <svg viewBox="0 0 30 30" className="h-[30px] w-[30px]" aria-hidden="true"><defs><linearGradient id="chat" x1="0" y1="0" x2="0" y2="1"><stop offset="0" stopColor="#8c85d8" /><stop offset="1" stopColor="#5257c4" /></linearGradient></defs><path d="M15 1a14 14 0 1 1-6.500 26.400L1.500 29l1.300-7A14 14 0 0 1 15 1z" fill="url(#chat)" /><rect x="7" y="9.500" width="11" height="11" rx="2" fill="#fff" /><path d="M19 13.500l4.500-3v9l-4.500-3z" fill="#fff" /></svg> },
  { name: "Microsoft Edge", icon: <svg viewBox="0 0 32 32" className="h-8 w-8" aria-hidden="true"><defs><linearGradient id="edgeTop" x1="0" y1="0" x2="1" y2="0.500"><stop offset="0" stopColor="#2aa9e8" /><stop offset="0.600" stopColor="#33c3d6" /><stop offset="1" stopColor="#62d65c" /></linearGradient><linearGradient id="edgeLow" x1="0" y1="0" x2="1" y2="1"><stop offset="0" stopColor="#1b8be0" /><stop offset="1" stopColor="#0c4a9a" /></linearGradient></defs><path d="M1 15C2 6 8 1 16 1c9 0 15 6 15 13 0 5-4 8-8.500 8-4 0-5.500-1.500-4.500-3 2-3 1-7-3-8.500C9 8.500 3 11 1 15z" fill="url(#edgeTop)" /><path d="M1 15c2-4 7-6.500 12-5.500-3 2-4.500 6-3.500 10 1.200 5 6 8.500 12 7.500 3-.6 5-2 6.500-3.500C25.500 28.500 21 31 16 31 7.500 31 1 24.500 1 15z" fill="url(#edgeLow)" /><path d="M13 9.500c-6 3-5 16 6 19.500-9 2-16.500-5-14.500-13 1-4 4.500-6.300 8.500-6.500z" fill="#0f6cc7" /></svg> },
  { name: "Microsoft Store", icon: <svg viewBox="0 0 30 32" className="h-8 w-[30px]" aria-hidden="true"><path d="M9 8V3.500Q9 2 10.500 2h9Q21 2 21 3.500V8" fill="none" stroke="#35a8e0" strokeWidth="2" /><path d="M1 6.500h28V27q0 3-3 3H4q-3 0-3-3z" fill="#f2f3f5" />{rects([[9, 12, 5.500, 5.500, "#f04e23"], [15.500, 12, 5.500, 5.500, "#7db928"], [9, 18.500, 5.500, 5.500, "#1ba2e6"], [15.500, 18.500, 5.500, 5.500, "#fbb912"]])}</svg> },
  { name: "Dell", icon: <span className="flex h-7 w-7 items-center justify-center rounded-full border-2 border-[#ddd] text-[9px] font-bold text-white">DELL</span> },
  { name: "File Explorer", icon: <svg viewBox="0 0 32 30" className="h-[30px] w-8" aria-hidden="true"><path d="M1 3q0-1.500 1.500-1.500h9L14.500 5H29q2 0 2 2v4H1z" fill="#e0a10b" /><path d="M1 8h13l3-2h14v20q0 2-2 2H3q-2 0-2-2z" fill="#fdd04f" /><path d="M6 28v-5q0-2 2-2h16q2 0 2 2v5z" fill="#1277d3" /><path d="M12 24.500h9" stroke="#0a4f96" strokeWidth="1.600" /></svg> },
  { name: "Firefox", icon: <svg viewBox="0 0 32 32" className="h-8 w-8" aria-hidden="true"><defs><linearGradient id="fox" x1="0.900" y1="0" x2="0.100" y2="1"><stop offset="0" stopColor="#fff04a" /><stop offset="0.450" stopColor="#ff9a1f" /><stop offset="0.750" stopColor="#ff4b45" /><stop offset="1" stopColor="#e0218a" /></linearGradient></defs><path d="M18 1c1 3 3 4 5 6l1-1c4 3 7 7 7 12A14 14 0 0 1 17 31C8 31 2 25 2 17c0-4 1-7 3-10l1.500 3L10 7l2 3c1-4 3-7 6-9z" fill="url(#fox)" /><circle cx="16" cy="17.500" r="7" fill="#8a45d8" /><path d="M8 13c3-2 6 0 8 1 3 0 3 2 0 3-4 1-3 5 2 5 4 0 6-3 6-7 2 6-1 12-8 12-6 0-10-6-8-14z" fill="#ff9422" /></svg> },
];

function Taskbar() {
  return (
    <div className="relative flex h-[60px] shrink-0 items-center border-t border-[#4a4a4a] bg-[linear-gradient(90deg,#231f33_0%,#231d35_22%,#2a183c_32%,#361c33_42%,#33221f_50%,#341a1f_56%,#4a1319_66%,#4c1414_71%,#3b1710_85%,#2b1615_100%)] text-white">
      <div className="flex flex-1 items-center pl-[13px]">
        <button aria-label="Widgets"><svg viewBox="0 0 30 28" className="h-7 w-[30px]" aria-hidden="true"><rect width="30" height="28" rx="2" fill="#0f5fae" /><rect x="2.500" y="3" width="11.500" height="22" rx="1" fill="#f3f6f8" /><rect x="16" y="3" width="11.500" height="11" rx="1" fill="#66d4fb" /><rect x="16" y="15.500" width="11.500" height="4.500" fill="#199df0" /><rect x="16" y="21" width="11.500" height="4" fill="#0c86e4" /></svg></button>
      </div>
      <div className="flex items-center">
        <button aria-label="Start" className="mr-[17px]"><svg viewBox="0 0 30 30" className="h-[30px] w-[30px]" aria-hidden="true"><defs><linearGradient id="win" x1="0" y1="0" x2="1" y2="1"><stop offset="0" stopColor="#86ddfb" /><stop offset="1" stopColor="#0c94f7" /></linearGradient></defs><path d="M0 1q0-1 1-1h13.500v14.500H0zM15.500 0H29q1 0 1 1v13.500H15.500zM0 15.500h14.500V30H1q-1 0-1-1zM15.500 15.500H30V29q0 1-1 1H15.500z" fill="url(#win)" /></svg></button>
        <label className="flex h-10 w-[275px] items-center gap-3 rounded-full border border-white/15 bg-white/15 pl-3.5">
          <Icon size="w-[18px] h-[20px]" box="0 0 18 20" className="text-[#e4dfe4]" sw={2.200}><circle cx="8.500" cy="8" r="6.500" /><path d="M12.500 13l4.500 5.500" /></Icon>
          <span className="sr-only">Search</span>
          <input placeholder="Search" className="w-full min-w-0 bg-transparent text-base outline-none placeholder:text-[#ddd6d9]" />
        </label>
        <div className="ml-[3px] flex">
          {apps.map((a) => (
            <button key={a.name} aria-label={a.name} className="flex h-[50px] w-[55px] items-center justify-center">{a.icon}</button>
          ))}
          <button aria-label="Tableau" className="relative flex h-[50px] w-[50px] items-center justify-center rounded-md border border-white/10 bg-white/10">
            <span className="flex h-7 w-7 items-center justify-center bg-white"><TableauMark className="h-6 w-6" colors={blueMark} /></span>
            <span className="absolute bottom-0.5 h-[3px] w-5 rounded-full bg-[#b9a6e6]" />
          </button>
        </div>
      </div>
      <div className="flex flex-1 items-center justify-end pr-6 text-[15px] leading-5">
        <button aria-label="Hidden icons" className="mr-6"><Icon size="w-3.5 h-2.5" box="0 0 14 10" className="text-white" sw={1.800}><path d="M1 8.500L7 2l6 6.500" /></Icon></button>
        <div className="mr-[22px] text-center"><div>ENG</div><div>INTL</div></div>
        <Icon size="w-5 h-5" box="0 0 20 20" className="mr-2.5 text-white" sw={1.300}><path d="M9 18.500A8.500 8.500 0 1 1 18.500 9M1.500 7h16M1.500 13H9M10 1.500q-4 3-4 8.500t3.500 8.500M10 1.500q3.500 3 4 7" /><circle cx="14.500" cy="14.500" r="4.500" /><path d="M11.500 17.500l6-6" /></Icon>
        <Icon size="w-5 h-5" box="0 0 20 20" className="mr-2.5 text-white" sw={1.300}><path d="M1.500 7.500h3.500L10 3v14l-5-4.500H1.500zM12.500 7q2.500 3 0 6" /><path d="M15 4.500q4.500 5.500 0 11" stroke="#888" /></Icon>
        <Icon size="w-[22px] h-4" box="0 0 22 16" className="mr-[18px] text-white" sw={1.500}><rect x="1" y="2" width="17" height="12" rx="3" /><rect x="3.500" y="4.500" width="11" height="7" fill="#fff" stroke="none" /><path d="M20.500 6v4" strokeWidth="2" /></Icon>
        <div className="text-right"><div>17:18</div><div>04-10-2023</div></div>
      </div>
    </div>
  );
}

export default function App() {
  return (
    <div className="relative flex min-h-screen flex-col bg-[#f4f4f4] font-['Open_Sans',sans-serif]">
      <TitleBar />
      <MenuBar />
      <Toolbar />
      <div className="flex flex-1">
        <DataPane />
        <div className="flex min-w-0 flex-1 gap-1.5 pb-[7px] pl-1.5">
          <Cards />
          <div className="mr-[206px] flex min-w-0 flex-1 flex-col gap-1.5">
            <Shelf name="Columns" icon={<svg viewBox="0 0 12 12" className="h-3 w-3 shrink-0" fill="#555" aria-hidden="true"><path d="M1 0h2v2H1zM5 0h2v2H5zM9 0h2v2H9zM1 3h2v9H1zM5 3h2v9H5zM9 3h2v9H9z" /></svg>}>
              <button className="flex h-6 w-[178px] items-center justify-between rounded-full bg-[#4996b2] pl-[13px] pr-3.5 font-medium text-white">
                Business types
                <svg viewBox="0 0 11 10" className="h-2.5 w-[11px]" fill="#fff" aria-hidden="true"><path d="M0 0h11v2H0zM0 4h7v2H0zM0 8h3v2H0z" /></svg>
              </button>
            </Shelf>
            <Shelf name="Rows" icon={<svg viewBox="0 0 12 12" className="h-3 w-3 shrink-0" fill="#555" aria-hidden="true"><path d="M0 1h2v2H0zM0 5h2v2H0zM0 9h2v2H0zM3 1h9v2H3zM3 5h9v2H3zM3 9h9v2H3z" /></svg>}>
              <button className="h-6 w-[178px] rounded-full bg-[#00b180] pl-[13px] text-left leading-6 font-medium text-white">SUM(Annual Payroll)</button>
            </Shelf>
            <Worksheet />
          </div>
        </div>
      </div>
      <SheetTabs />
      <StatusBar />
      <Taskbar />
      <ShowMe />
    </div>
  );
}
